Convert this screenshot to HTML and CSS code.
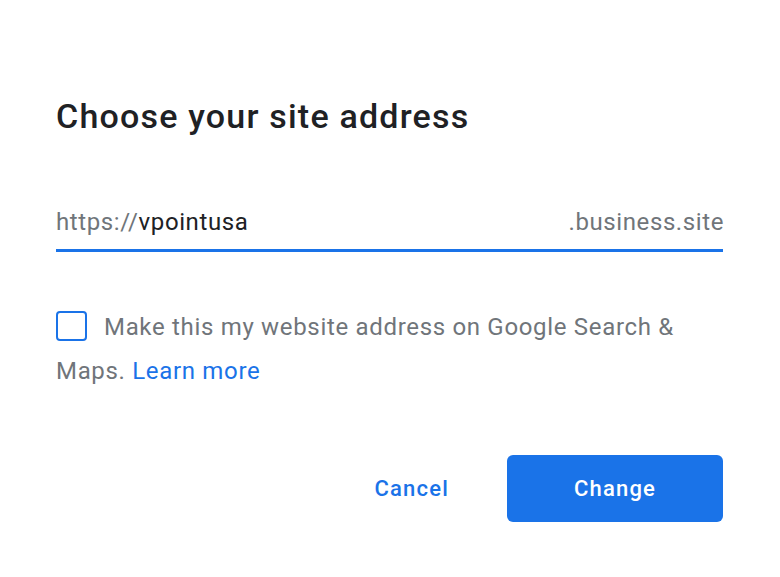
FILE: index.html
```html
<!DOCTYPE html>
<html>
<head>
<meta charset="utf-8">
<link rel="stylesheet" href="styles.css">
</head>
<body>
<div class="dialog">
  <h1 class="title">Choose your site address</h1>
  <div class="field">
    <span class="url"><span class="prefix">https://</span><span class="value">vpointusa</span></span>
    <span class="suffix">.business.site</span>
  </div>
  <p class="check"><span class="box"></span>Make this my website address on Google Search &amp; Maps. <a class="link" href="#">Learn more</a></p>
  <div class="actions">
    <button class="btn btn-text">Cancel</button>
    <button class="btn btn-primary">Change</button>
  </div>
</div>
</body>
</html>
```
FILE: styles.css
```css
html, body {
  margin: 0;
  padding: 0;
  background: #fff;
}
body {
  font-family: Roboto, "Noto Sans", sans-serif;
  width: 780px;
  height: 577px;
  overflow: hidden;
}
.dialog {
  padding: 92px 57px 0 56px;
}
.title {
  margin: 0;
  font-size: 34px;
  font-weight: 500;
  line-height: 48px;
  letter-spacing: 1.2px;
  color: #202124;
}
.field {
  margin-top: 66px;
  display: flex;
  justify-content: space-between;
  align-items: baseline;
  font-size: 24px;
  line-height: 32px;
  letter-spacing: 0.6px;
  padding-bottom: 11px;
  border-bottom: 3px solid #1a73e8;
}
.prefix { color: #70757a; }
.value { color: #202124; }
.suffix { color: #70757a; margin-right: -1px; }
.check {
  margin: 53px 0 0 0;
  font-size: 24px;
  line-height: 44px;
  letter-spacing: 0.68px;
  color: #70757a;
}
.box {
  display: inline-block;
  box-sizing: border-box;
  width: 31px;
  height: 30px;
  border: 2.5px solid #1a73e8;
  border-radius: 4px;
  vertical-align: -6px;
  margin-right: 17px;
}
.link {
  color: #1a73e8;
  text-decoration: none;
}
.actions {
  margin-top: 62px;
  display: flex;
  justify-content: flex-end;
  align-items: center;
  gap: 34px;
}
.btn {
  font-family: Roboto, "Noto Sans", sans-serif;
  font-size: 22px;
  font-weight: 500;
  letter-spacing: 1.2px;
  border: none;
  cursor: pointer;
}
.btn-text {
  background: none;
  color: #1a73e8;
  padding: 0 24px;
  height: 66px;
}
.btn-primary {
  background: #1a73e8;
  color: #fff;
  width: 216px;
  height: 67px;
  border-radius: 6px;
}
```
